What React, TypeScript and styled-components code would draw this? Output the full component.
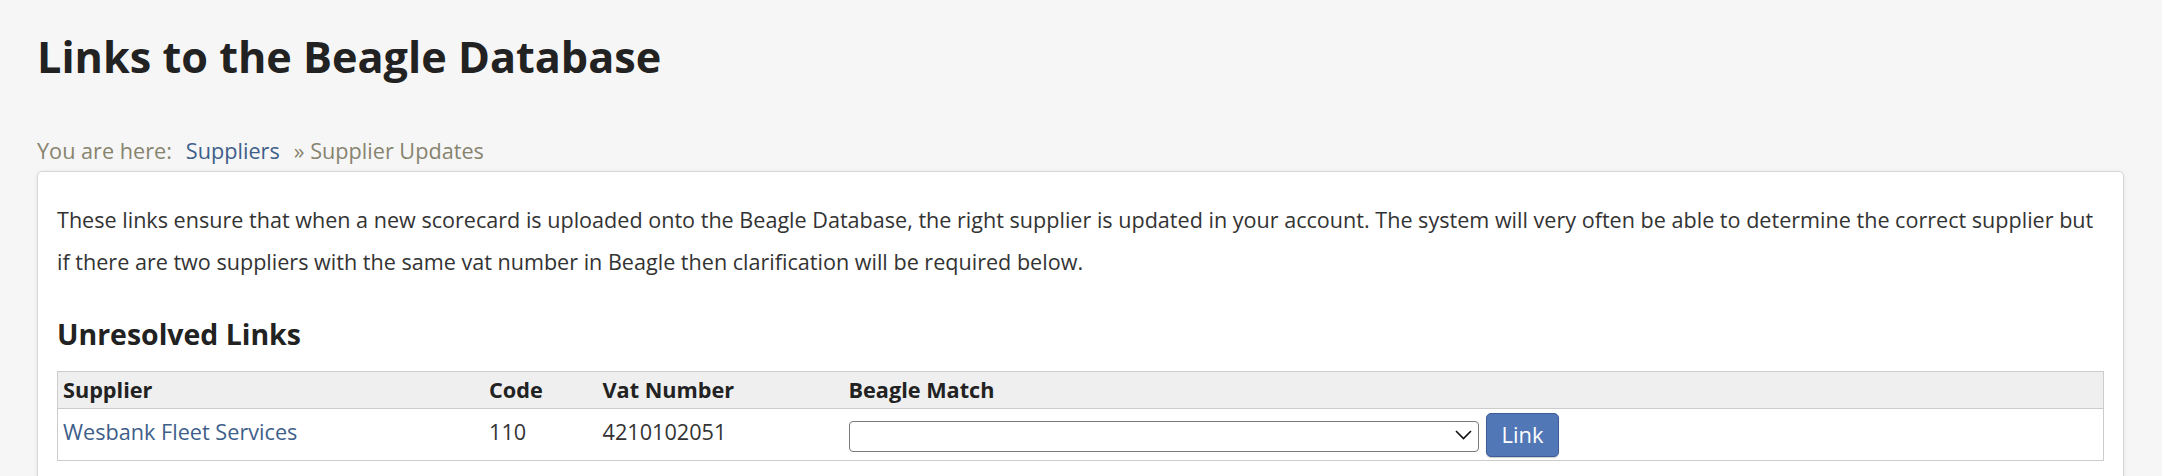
import React from 'react';
import styled, { createGlobalStyle } from 'styled-components';

const GlobalStyle = createGlobalStyle`
  html, body {
    margin: 0;
    padding: 0;
    background: #f6f6f6;
  }
  body {
    font-family: 'Open Sans', 'Liberation Sans', sans-serif;
    color: #333;
  }
  * {
    box-sizing: border-box;
  }
`;

const Page = styled.div`
  padding: 31px 38px 0 37px;
`;

const Title = styled.h1`
  margin: 0;
  font-size: 43.2px;
  line-height: 51.2px;
  font-weight: 700;
  color: #222;
`;

const Breadcrumb = styled.div`
  margin: 53px 0 3.5px;
  display: flex;
  gap: 14px;
  font-size: 21.67px;
  line-height: 32px;
  color: #87846f;
`;

const Crumb = styled.a`
  color: #3e5f8a;
  text-decoration: none;
`;

const Card = styled.div`
  background: #fff;
  border: 1px solid #d6d6d6;
  border-radius: 5px;
  box-shadow: 0 1px 4px rgba(0, 0, 0, 0.08);
  padding: 27px 19px 19px 19px;
`;

const Intro = styled.p`
  margin: 0;
  font-size: 21.58px;
  line-height: 42.67px;
  color: #333;
`;

const SectionTitle = styled.h3`
  margin: 34px 0 19.7px;
  font-size: 28.45px;
  line-height: 33.6px;
  font-weight: 700;
  color: #222;
`;

const Table = styled.table`
  width: 100%;
  table-layout: fixed;
  border-collapse: collapse;
  border: 1px solid #ccc;
  font-size: 21.67px;
`;

const Th = styled.th<{ $width?: number }>`
  width: ${(p) => (p.$width ? `${p.$width}px` : 'auto')};
  background: #efefef;
  border-bottom: 1px solid #ccc;
  padding: 2px 5px;
  line-height: 32px;
  text-align: left;
  font-weight: 700;
  color: #222;
`;

const Td = styled.td<{ $action?: boolean }>`
  padding: ${(p) => (p.$action ? '3px 5px' : '0 5px 5px')};
  height: 50px;
  line-height: 32px;
  vertical-align: middle;
  color: #333;
`;

const SupplierLink = styled.a`
  color: #3e5f8a;
  text-decoration: none;
`;

const MatchCell = styled.div`
  display: flex;
  align-items: center;
  gap: 7px;
`;

const SelectWrap = styled.div`
  position: relative;
  width: 630px;
  height: 31px;
`;

const Select = styled.select`
  appearance: none;
  -webkit-appearance: none;
  width: 100%;
  height: 100%;
  background: #fff;
  border: 1px solid #7a7a7a;
  border-radius: 4px;
  font-family: inherit;
  font-size: 18px;
  padding: 0 30px 0 6px;
`;

const Chevron = styled.svg`
  position: absolute;
  right: 7px;
  top: 11px;
  pointer-events: none;
`;

const LinkButton = styled.button`
  height: 44px;
  padding: 0 15px;
  margin-top: 1px;
  background: #5277b6;
  border: 1px solid #3d5d98;
  border-radius: 5px;
  box-shadow: 0 1px 1px rgba(0, 0, 0, 0.2);
  color: #fff;
  font-family: inherit;
  font-size: 21.9px;
  line-height: 1;
  cursor: pointer;
`;

const App: React.FC = () => {
  return (
    <>
      <GlobalStyle />
      <Page>
        <Title>Links to the Beagle Database</Title>
        <Breadcrumb>
          <span>You are here:</span>
          <Crumb href="#">Suppliers</Crumb>
          <span>» Supplier Updates</span>
        </Breadcrumb>
        <Card>
          <Intro>
            These links ensure that when a new scorecard is uploaded onto the Beagle Database, the right supplier is
            updated in your account. The system will very often be able to determine the correct supplier but if there
            are two suppliers with the same vat number in Beagle then clarification will be required below.
          </Intro>
          <SectionTitle>Unresolved Links</SectionTitle>
          <Table>
            <thead>
              <tr>
                <Th $width={426.5}>Supplier</Th>
                <Th $width={113.5}>Code</Th>
                <Th $width={246}>Vat Number</Th>
                <Th>Beagle Match</Th>
              </tr>
            </thead>
            <tbody>
              <tr>
                <Td>
                  <SupplierLink href="#">Wesbank Fleet Services</SupplierLink>
                </Td>
                <Td>110</Td>
                <Td>4210102051</Td>
                <Td $action>
                  <MatchCell>
                    <SelectWrap>
                      <Select defaultValue="">
                        <option value=""></option>
                      </Select>
                      <Chevron width="17" height="10" viewBox="0 0 17 10">
                        <polyline points="1,1 8.5,8.5 16,1" fill="none" stroke="#111" strokeWidth="1.6" />
                      </Chevron>
                    </SelectWrap>
                    <LinkButton>Link</LinkButton>
                  </MatchCell>
                </Td>
              </tr>
            </tbody>
          </Table>
        </Card>
      </Page>
    </>
  );
};

export default App;
